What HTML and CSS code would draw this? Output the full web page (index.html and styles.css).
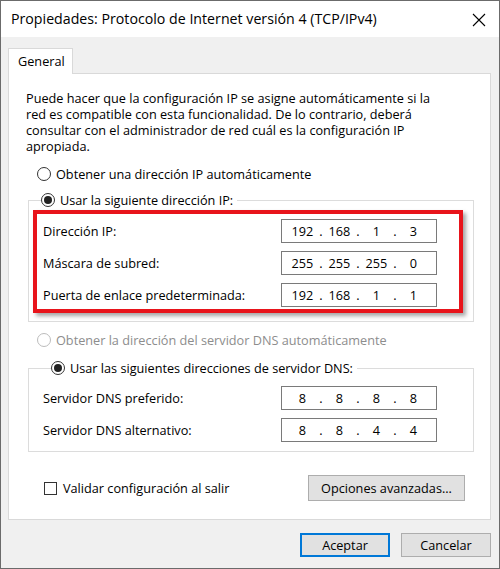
FILE: index.html
```html
<!DOCTYPE html>
<html lang="es">
<head>
<meta charset="utf-8">
<title>Propiedades</title>
<link rel="stylesheet" href="styles.css">
</head>
<body>
<div class="window">
  <div class="titlebar">
    <span class="title">Propiedades: Protocolo de Internet versión 4 (TCP/IPv4)</span>
    <svg class="close" width="14" height="14" viewBox="0 0 14 14"><path d="M1 1 L13 13 M13 1 L1 13" stroke="#000" stroke-width="1.1" fill="none"/></svg>
  </div>
  <div class="body">
    <div class="tabs"><div class="tab">General</div></div>
    <div class="panel">
      <p class="desc">Puede hacer que la configuración IP se asigne automáticamente si la<br>red es compatible con esta funcionalidad. De lo contrario, deberá<br>consultar con el administrador de red cuál es la configuración IP<br>apropiada.</p>
      <div class="opt first"><span class="radio"></span>Obtener una dirección IP automáticamente</div>
      <div class="group g1">
        <div class="legend"><span class="radio checked"></span>Usar la siguiente dirección IP:</div>
        <div class="highlight">
          <div class="row"><span>Dirección IP:</span><div class="ip"><span class="f">192</span><span class="d">.</span><span class="f">168</span><span class="d">.</span><span class="f">1</span><span class="d">.</span><span class="f">3</span></div></div>
          <div class="row"><span>Máscara de subred:</span><div class="ip"><span class="f">255</span><span class="d">.</span><span class="f">255</span><span class="d">.</span><span class="f">255</span><span class="d">.</span><span class="f">0</span></div></div>
          <div class="row"><span>Puerta de enlace predeterminada:</span><div class="ip"><span class="f">192</span><span class="d">.</span><span class="f">168</span><span class="d">.</span><span class="f">1</span><span class="d">.</span><span class="f">1</span></div></div>
        </div>
      </div>
      <div class="opt disabled"><span class="radio"></span>Obtener la dirección del servidor DNS automáticamente</div>
      <div class="group g2">
        <div class="legend"><span class="radio checked"></span>Usar las siguientes direcciones de servidor DNS:</div>
        <div class="rows">
          <div class="row"><span>Servidor DNS preferido:</span><div class="ip"><span class="f">8</span><span class="d">.</span><span class="f">8</span><span class="d">.</span><span class="f">8</span><span class="d">.</span><span class="f">8</span></div></div>
          <div class="row"><span>Servidor DNS alternativo:</span><div class="ip"><span class="f">8</span><span class="d">.</span><span class="f">8</span><span class="d">.</span><span class="f">4</span><span class="d">.</span><span class="f">4</span></div></div>
        </div>
      </div>
      <div class="bottom">
        <div class="check"><span class="box"></span>Validar configuración al salir</div>
        <div class="btn adv">Opciones avanzadas...</div>
      </div>
    </div>
    <div class="actions">
      <div class="btn primary">Aceptar</div>
      <div class="btn">Cancelar</div>
    </div>
  </div>
</div>
</body>
</html>
```
FILE: styles.css
```css
* { box-sizing: border-box; }
html, body { margin: 0; padding: 0; background: #fff; }
body {
  font-family: "Open Sans", "Noto Sans", sans-serif;
  font-size: 12.7px;
  color: #000;
}
.window {
  width: 500px;
  height: 569px;
  border: 1px solid #6b6b6b;
  display: flex;
  flex-direction: column;
  overflow: hidden;
}
.titlebar {
  height: 36px;
  background: #fff;
  display: flex;
  align-items: center;
  justify-content: space-between;
  padding: 0 13px 0 10px;
  flex: none;
}
.title { font-size: 14.2px; line-height: 20px; }
.close { display: block; margin-top: 1px; }
.body {
  flex: 1;
  background: #f0f0f0;
  padding: 0 8px 0 7px;
  display: flex;
  flex-direction: column;
}
.tabs { display: flex; margin-top: 11px; height: 25px; }
.tab {
  width: 65px;
  height: 26px;
  background: #fff;
  border: 1px solid #d9d9d9;
  border-bottom: none;
  padding: 4px 0 0 9px;
  line-height: 16px;
  position: relative;
  z-index: 1;
}
.panel {
  background: #fff;
  border: 1px solid #d9d9d9;
  height: 447px;
  padding: 16px 16px 0 17px;
  display: flex;
  flex-direction: column;
}
.desc { margin: 0; line-height: 16px; }
.opt, .legend {
  display: flex;
  align-items: center;
  height: 16px;
  line-height: 16px;
  white-space: nowrap;
}
.opt { margin-left: 11px; }
.opt.first { margin-top: 12px; }
.radio {
  width: 14px;
  height: 14px;
  border: 1px solid #333;
  border-radius: 50%;
  background: #fff;
  margin-right: 5px;
  display: flex;
  align-items: center;
  justify-content: center;
  flex: none;
}
.radio.checked::after {
  content: "";
  width: 8px;
  height: 8px;
  border-radius: 50%;
  background: #222;
}
.opt.disabled { color: #8d8d8d; margin-top: 10px; }
.opt.disabled .radio { border-color: #bcbcbc; }
.group {
  border: 1px solid #dcdcdc;
  margin-left: 2px;
}
.g1 { margin-top: 18px; padding: 0 10px 8px 4px; }
.g2 { margin-top: 20px; padding: 0 36px 9px 14px; }
.legend {
  width: max-content;
  margin: -9px 0 0 8px;
  background: #fff;
  padding-right: 4px;
}
.highlight {
  margin-top: 2px;
  border: 4px solid #e8141b;
  box-shadow: 3px 3px 4px rgba(0, 0, 0, 0.35);
  padding: 5px 22px 2px 6px;
  display: flex;
  flex-direction: column;
  gap: 8px;
}
.rows { margin-top: 10px; display: flex; flex-direction: column; gap: 8px; }
.row {
  display: flex;
  align-items: center;
  justify-content: space-between;
  height: 24px;
  white-space: nowrap;
}
.ip {
  width: 156px;
  height: 24px;
  border: 1px solid #7a7a7a;
  background: #fff;
  display: flex;
  align-items: center;
  padding-left: 5px;
}
.ip .f { width: 31px; text-align: center; }
.ip .d { width: 6px; text-align: center; }
.bottom {
  margin-top: 23px;
  display: flex;
  align-items: center;
  justify-content: space-between;
  padding: 0 9px 0 18px;
}
.check { display: flex; align-items: center; line-height: 16px; }
.box {
  width: 13px;
  height: 13px;
  border: 1px solid #333;
  background: #fff;
  margin-right: 6px;
}
.btn {
  background: #e1e1e1;
  border: 1px solid #adadad;
  display: flex;
  align-items: center;
  justify-content: center;
  line-height: 16px;
  white-space: nowrap;
}
.adv { width: 157px; height: 26px; }
.actions {
  display: flex;
  justify-content: flex-end;
  gap: 11px;
  margin-top: 13px;
}
.actions .btn { width: 90px; height: 24px; }
.btn.primary { border: 2px solid #0078d7; }
```
